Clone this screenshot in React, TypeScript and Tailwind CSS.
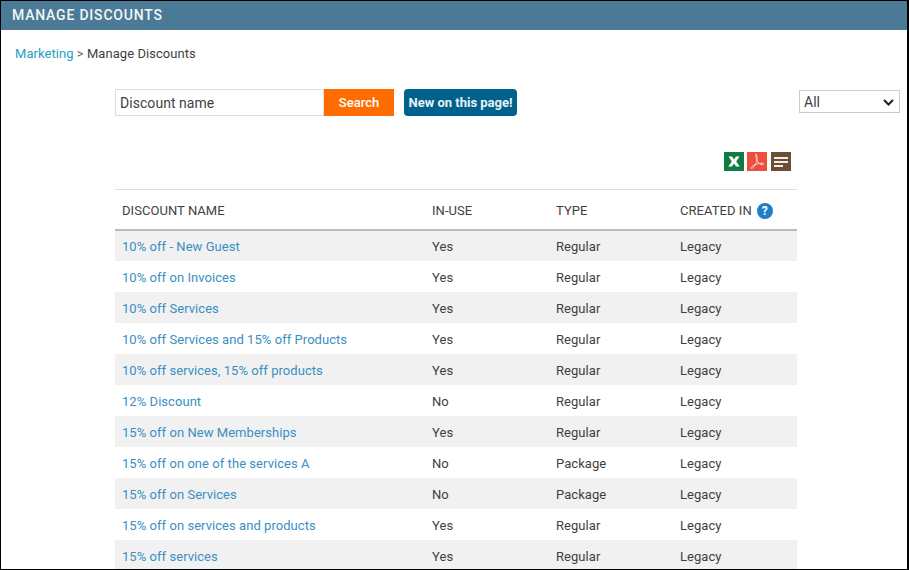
const ROWS = [
  ["10% off - New Guest", "Yes", "Regular", "Legacy"],
  ["10% off on Invoices", "Yes", "Regular", "Legacy"],
  ["10% off Services", "Yes", "Regular", "Legacy"],
  ["10% off Services and 15% off Products", "Yes", "Regular", "Legacy"],
  ["10% off services, 15% off products", "Yes", "Regular", "Legacy"],
  ["12% Discount", "No", "Regular", "Legacy"],
  ["15% off on New Memberships", "Yes", "Regular", "Legacy"],
  ["15% off on one of the services A", "No", "Package", "Legacy"],
  ["15% off on Services", "No", "Package", "Legacy"],
  ["15% off on services and products", "Yes", "Regular", "Legacy"],
  ["15% off services", "Yes", "Regular", "Legacy"],
];

const HEAD_CELL = "box-border h-[42px] border-t border-b-2 border-t-[#ddd] border-b-[#bbb] pl-[7px] pt-[2px] font-normal";

function ExportIcons() {
  return (
    <div className="flex justify-end gap-[3px] pr-[6px]">
      <span className="flex h-[19px] w-5 items-center justify-center bg-[#107c41]">
        <svg width="14" height="13" viewBox="0 0 14 13">
          <path d="M1.5 1.500h3.600L7 4.600 8.900 1.500h3.600L9.200 6.500l3.500 5H9L7 8.400 5 11.500H1.300L4.800 6.500z" fill="#fff" />
        </svg>
      </span>
      <span className="flex h-[19px] w-5 items-center justify-center bg-[#ec4f3d]">
        <svg width="18" height="17" viewBox="0 0 18 17" fill="none" stroke="#fbd5cf" strokeWidth="1">
          <path d="M8.500 1.500c-1 0-.6 3.500.6 6.300 1 2 3 3.700 5.400 3.900 1.500.1 1.500-1.500 0-1.500-3.200-.2-7 1.100-9.700 2.800-1.600 1.100-2.100 2.500-1 2.500 1 0 3-2.800 4.400-6 1.100-2.700 1.400-8-.7-8z" />
        </svg>
      </span>
      <span className="ml-[1px] flex h-[19px] w-5 flex-col justify-center gap-[2px] bg-[#6b4f35] pl-[3px]">
        <span className="h-[2px] w-[14px] bg-[#f3eee8]" />
        <span className="h-[2px] w-[14px] bg-[#f3eee8]" />
        <span className="h-[2px] w-[9px] bg-[#f3eee8]" />
      </span>
    </div>
  );
}

export default function App() {
  return (
    <div className="box-border h-[570px] w-[909px] overflow-hidden border border-r-2 border-black bg-white font-['Roboto',sans-serif] text-[13px] text-[#3f3f3f]">
      <div className="flex h-[29px] items-center bg-[#4a7a96] px-[11px] text-[14px] font-medium tracking-[0.8px] text-[#f2f6f8]">
        MANAGE DISCOUNTS
      </div>

      <div className="pl-[14px] pt-4 leading-[16px] tracking-[0.05px]">
        <span className="text-[#27a0bd]">Marketing</span>
        <span className="text-[#666]"> &gt; </span>
        <span>Manage Discounts</span>
      </div>

      <div className="mt-[27px] flex items-start pl-[114px] pr-[7px]">
        <div className="box-border flex h-[27px] w-[209px] items-center border border-[#ddd] pl-[4px] pt-[1px] text-[14px] tracking-[0.05px]">
          Discount name
        </div>
        <div className="flex h-[27px] w-[70px] items-center justify-center bg-[#ff6d00] font-medium text-white">
          Search
        </div>
        <div className="ml-[10px] flex h-[27px] w-[113px] items-center justify-center rounded-[4px] bg-[#00628c] font-bold text-[#e8f1f5]">
          New on this page!
        </div>
        <div className="ml-auto mt-[1px] box-border flex h-[23px] w-[101px] items-center justify-between border border-[#ccc] pl-1 pr-[5px] pt-[1px] text-[14px]">
          All
          <svg width="11" height="7" viewBox="0 0 11 7" fill="none" stroke="#222" strokeWidth="2">
            <path d="M1 1l4.500 4.500L10 1" />
          </svg>
        </div>
      </div>

      <div className="ml-[114px] w-[682px]">
        <div className="mt-[36px]">
          <ExportIcons />
        </div>
        <table className="mt-[18px] w-full table-fixed border-separate border-spacing-0 tracking-[0.05px]">
          <colgroup>
            <col className="w-[310px]" />
            <col className="w-[124px]" />
            <col className="w-[124px]" />
            <col className="w-[124px]" />
          </colgroup>
          <thead>
            <tr className="text-left">
              <th className={HEAD_CELL}>DISCOUNT NAME</th>
              <th className={HEAD_CELL}>IN-USE</th>
              <th className={HEAD_CELL}>TYPE</th>
              <th className={HEAD_CELL}>
                <span className="flex items-center gap-[5px]">
                  CREATED IN
                  <span className="flex h-4 w-4 items-center justify-center rounded-full bg-[#1f7fc8] text-[12px] font-bold text-white">?</span>
                </span>
              </th>
            </tr>
          </thead>
          <tbody>
            {ROWS.map(([name, inUse, type, created]) => (
              <tr key={name} className="h-[31px] first:h-[30px] odd:bg-[#f1f1f1]">
                <td className="pl-[7px] pt-[2px] text-[#3a8fc4]">{name}</td>
                <td className="pl-[7px] pt-[2px]">{inUse}</td>
                <td className="pl-[7px] pt-[2px]">{type}</td>
                <td className="pl-[7px] pt-[2px]">{created}</td>
              </tr>
            ))}
          </tbody>
        </table>
      </div>
    </div>
  );
}
